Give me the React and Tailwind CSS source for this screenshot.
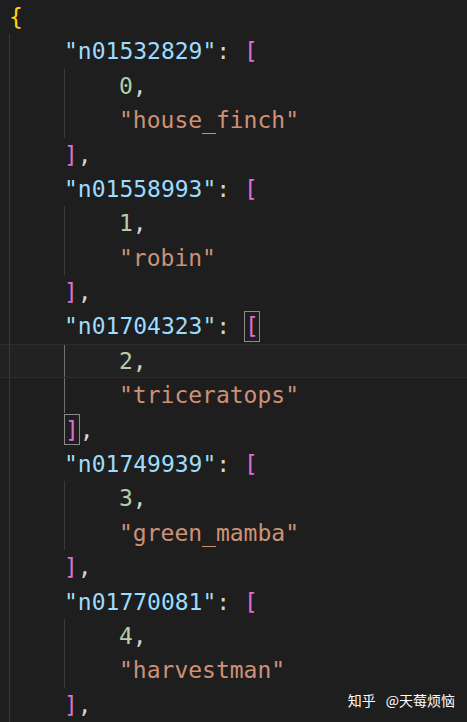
const lines = [
  { indent: 0, parts: [["{", "text-[#ffd700]"]] },
  { indent: 1, parts: [['"n01532829"', "text-[#9cdcfe]"], [": ", "text-[#d4d4d4]"], ["[", "text-[#da70d6]"]] },
  { indent: 2, parts: [["0", "text-[#b5cea8]"], [",", "text-[#d4d4d4]"]] },
  { indent: 2, parts: [['"house_finch"', "text-[#ce9178]"]] },
  { indent: 1, parts: [["]", "text-[#da70d6]"], [",", "text-[#d4d4d4]"]] },
  { indent: 1, parts: [['"n01558993"', "text-[#9cdcfe]"], [": ", "text-[#d4d4d4]"], ["[", "text-[#da70d6]"]] },
  { indent: 2, parts: [["1", "text-[#b5cea8]"], [",", "text-[#d4d4d4]"]] },
  { indent: 2, parts: [['"robin"', "text-[#ce9178]"]] },
  { indent: 1, parts: [["]", "text-[#da70d6]"], [",", "text-[#d4d4d4]"]] },
  { indent: 1, parts: [['"n01704323"', "text-[#9cdcfe]"], [": ", "text-[#d4d4d4]"], ["[", "text-[#da70d6]", true]] },
  { indent: 2, active: true, current: true, parts: [["2", "text-[#b5cea8]"], [",", "text-[#d4d4d4]"]] },
  { indent: 2, active: true, parts: [['"triceratops"', "text-[#ce9178]"]] },
  { indent: 1, parts: [["]", "text-[#da70d6]", true], [",", "text-[#d4d4d4]"]] },
  { indent: 1, parts: [['"n01749939"', "text-[#9cdcfe]"], [": ", "text-[#d4d4d4]"], ["[", "text-[#da70d6]"]] },
  { indent: 2, parts: [["3", "text-[#b5cea8]"], [",", "text-[#d4d4d4]"]] },
  { indent: 2, parts: [['"green_mamba"', "text-[#ce9178]"]] },
  { indent: 1, parts: [["]", "text-[#da70d6]"], [",", "text-[#d4d4d4]"]] },
  { indent: 1, parts: [['"n01770081"', "text-[#9cdcfe]"], [": ", "text-[#d4d4d4]"], ["[", "text-[#da70d6]"]] },
  { indent: 2, parts: [["4", "text-[#b5cea8]"], [",", "text-[#d4d4d4]"]] },
  { indent: 2, parts: [['"harvestman"', "text-[#ce9178]"]] },
  { indent: 1, parts: [["]", "text-[#da70d6]"], [",", "text-[#d4d4d4]"]] },
];

function Line({ line }) {
  const guides = [];
  for (let i = 0; i < line.indent; i++) {
    const bright = line.active && i === 1;
    guides.push(
      <span
        key={i}
        className={
          "h-full w-[55px] shrink-0 border-l " +
          (bright ? "border-[#707070]" : "border-[#3a3a3a]")
        }
      />
    );
  }
  return (
    <div
      className={
        "flex h-[34.4px] items-center whitespace-pre pl-[9px] " +
        (line.current ? "border-y border-[#2e2e2e] bg-[#222222]" : "")
      }
    >
      {guides}
      {line.parts.map(([text, cls, boxed], i) =>
        boxed ? (
          <span
            key={i}
            className={"inline-flex h-[31px] items-center border border-[#8a8a8a] " + cls}
          >
            {text}
          </span>
        ) : (
          <span key={i} className={cls}>
            {text}
          </span>
        )
      )}
    </div>
  );
}

export default function App() {
  return (
    <div className="relative h-[722px] w-[467px] overflow-hidden bg-[#1e1e1e] font-['DejaVu_Sans_Mono',monospace] text-[23px]">
      {lines.map((line, i) => (
        <Line key={i} line={line} />
      ))}
      <div className="absolute bottom-[11px] right-[12px] flex gap-[10px] font-['Noto_Sans_CJK_SC',sans-serif] text-[14px] text-white">
        <span>知乎</span>
        <span>@天莓烦恼</span>
      </div>
    </div>
  );
}
